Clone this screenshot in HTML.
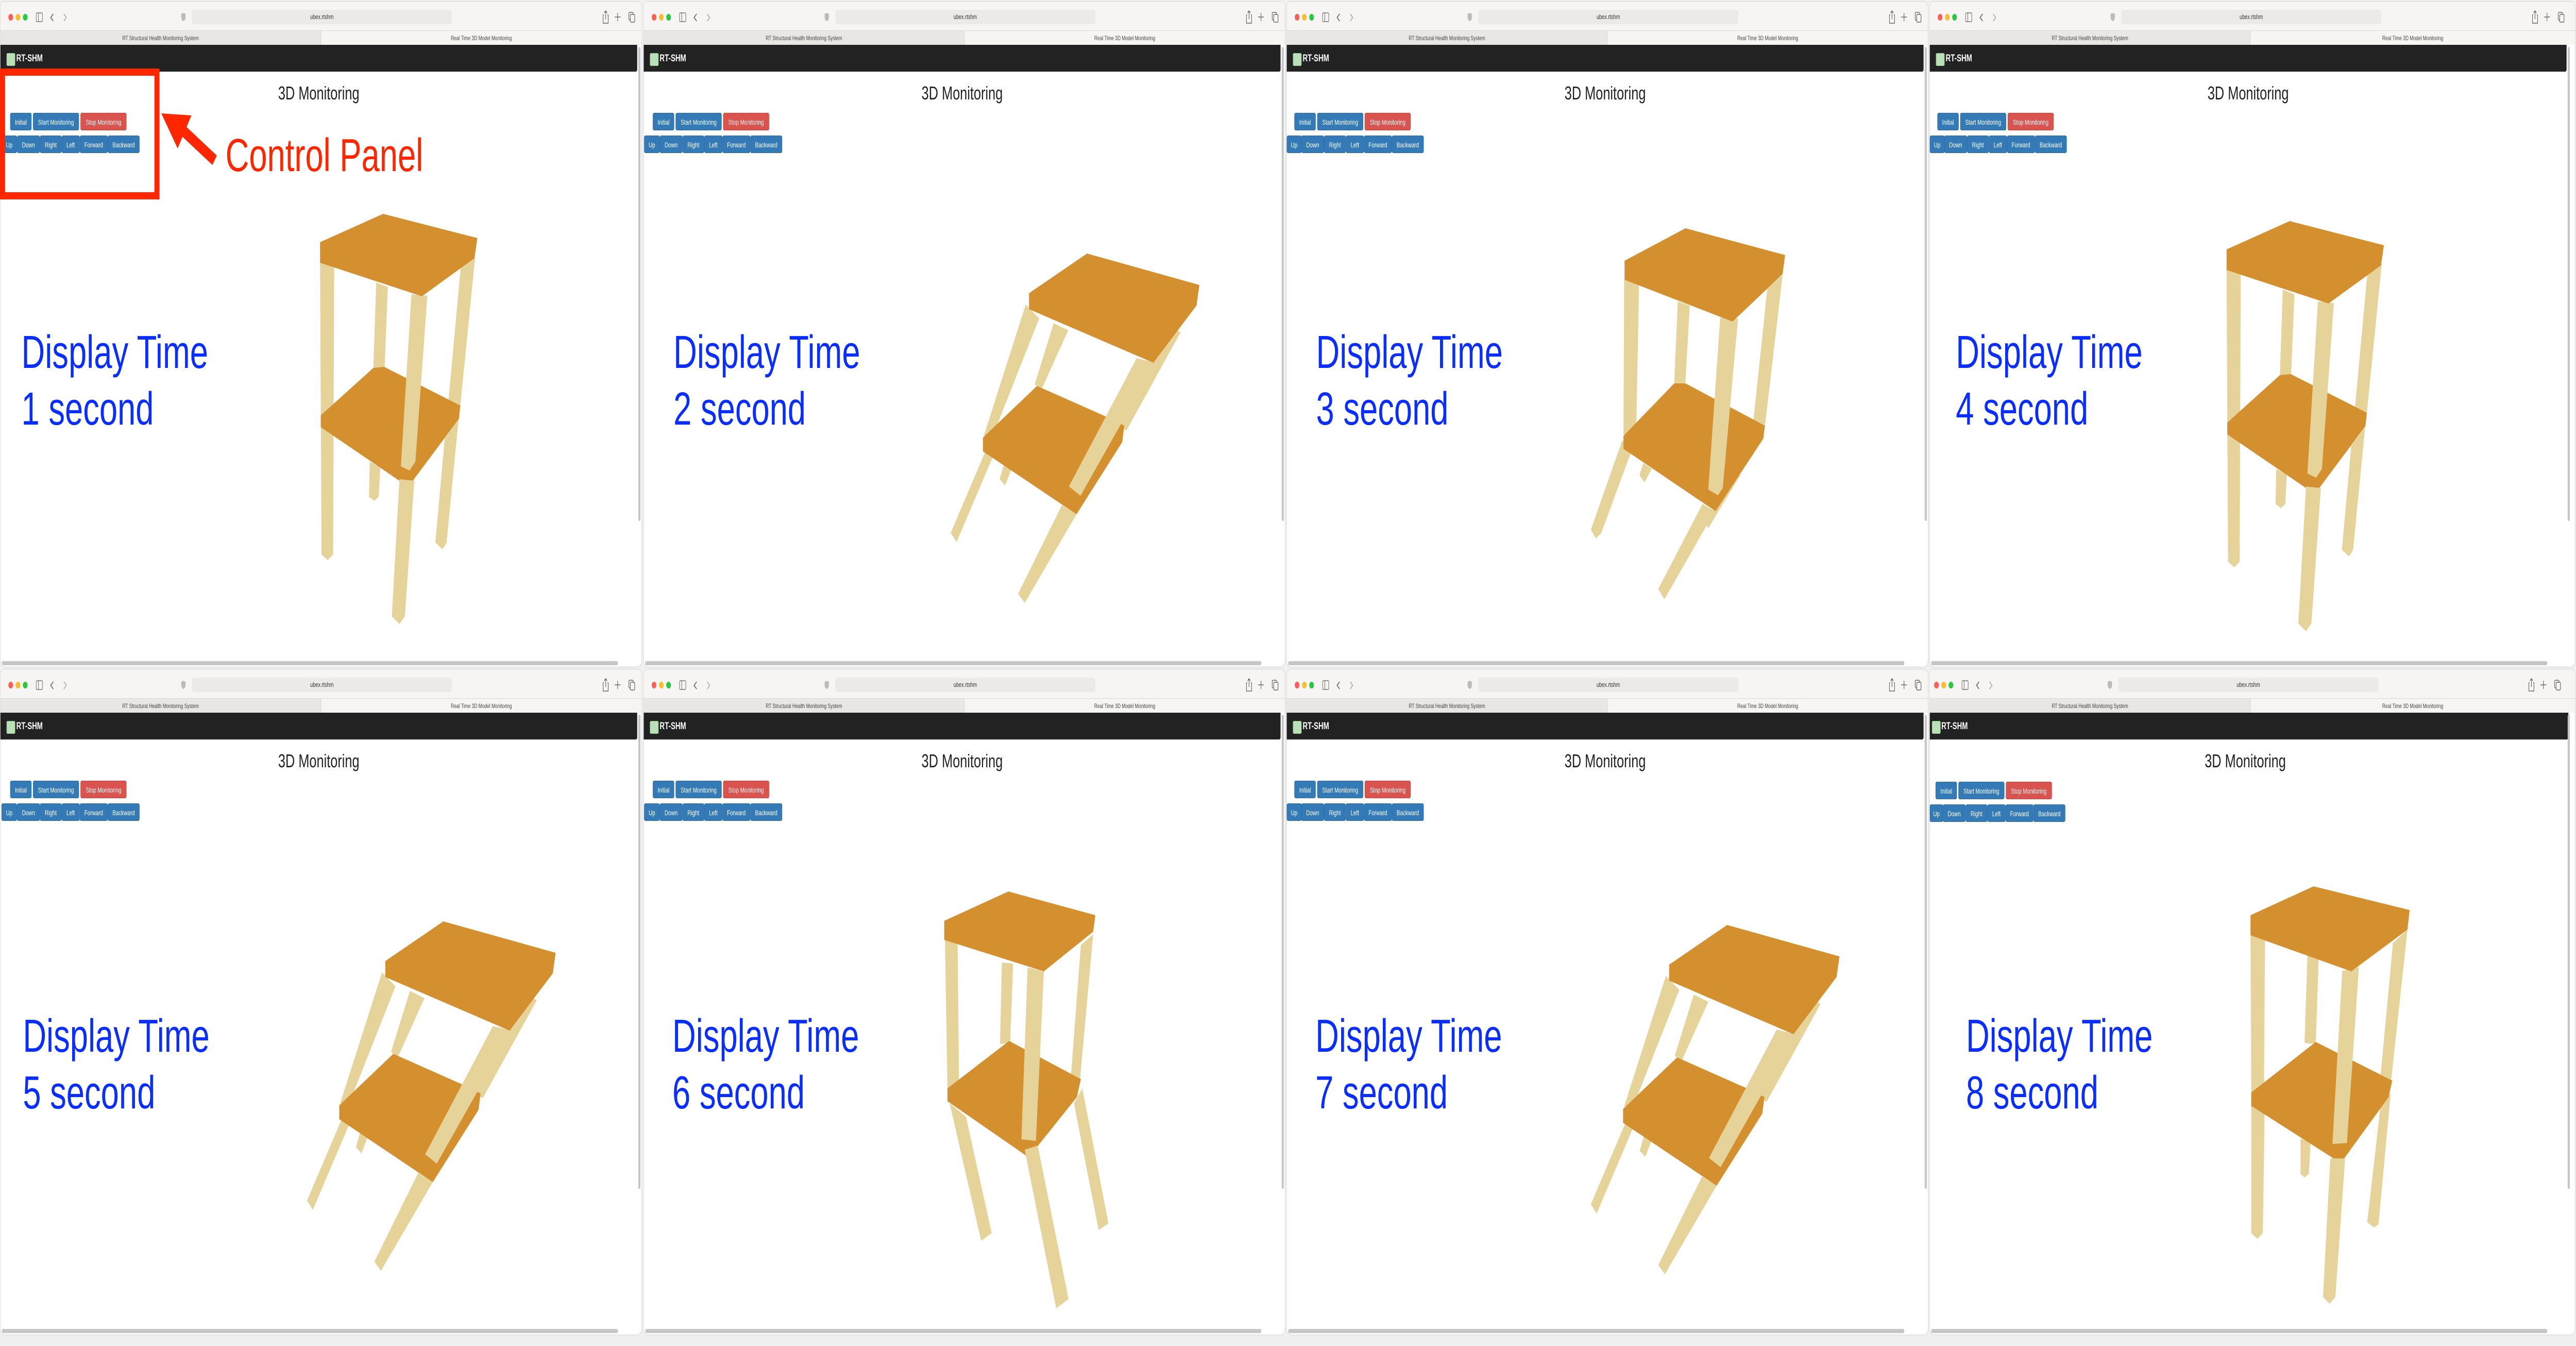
<!DOCTYPE html>
<html><head><meta charset="utf-8"><style>
*{margin:0;padding:0;box-sizing:border-box}
html,body{width:100%;height:100%;overflow:hidden;background:#f0f0f0}
#root{position:relative;width:7107px;height:2612px;background:#f0f0f0;font-family:"Liberation Sans",Arial,sans-serif;overflow:hidden}
.p{position:absolute;width:1771px;height:1293px;background:#fff;border:1px solid #d2d2d2;border-radius:12px;overflow:hidden}
.tb{position:absolute;left:0;top:0;width:100%;height:56px;background:#f6f5f4}
.tl{position:absolute;top:24px;width:13px;height:13px;border-radius:50%}
.addr{position:absolute;left:528px;top:16px;width:718px;height:28px;background:#ebeae9;border-radius:7px;font-size:13px;color:#333;text-align:center;line-height:28px}
.tabs{position:absolute;left:0;top:56px;width:100%;height:28px;background:#f6f5f4;border-top:1px solid #d6d6d6}
.tab1{position:absolute;left:0;top:0;width:885px;height:28px;background:#e8e7e6;border-right:1px solid #d0d0d0;font-size:12px;color:#444;text-align:center;line-height:28px}
.tab2{position:absolute;left:885px;top:0;right:0;height:28px;font-size:12px;color:#444;text-align:center;line-height:28px}
.nav{position:absolute;left:0;top:84px;width:1757px;height:52px;background:#222;border-radius:0 0 4px 0}
.logo{position:absolute;left:17px;top:16px;width:24px;height:25px;background:#b9e0b6;border:1px solid #8fc48a;border-radius:3px}
.brand{position:absolute;left:44px;top:14px;color:#fff;font-size:19px;font-weight:bold;line-height:26px}
.vs{position:absolute;left:1760px;top:88px;width:6px;height:920px;background:#c6c6c6;border-radius:3px}
.hs{position:absolute;left:4px;top:1280px;width:1700px;height:8px;background:#c6c6c6;border-radius:4px}
.ttl{position:absolute;left:0;width:1757px;top:160px;text-align:center;font-size:36px;line-height:36px;color:#222}
.b{position:absolute;height:34px;color:#fff;font-size:14px;line-height:34px;text-align:center;background:#337ab7;border:1px solid #2e6da4;border-radius:4px}
.r{background:#d9534f;border-color:#d43f3a}
.dt{position:absolute;font-size:90px;line-height:110px;color:#0a2eff;white-space:nowrap}
.ico{position:absolute}
</style></head><body>
<svg style="position:fixed;left:0;top:0;width:100vw;height:100vh" viewBox="0 0 7107 2612" preserveAspectRatio="none"><foreignObject x="0" y="0" width="7107" height="2612"><div xmlns="http://www.w3.org/1999/xhtml" id="root">

<div class="p" style="left:0;top:2px">
<div class="tb"><div class="tl" style="left:22px;background:#ff5f57"></div><div class="tl" style="left:42px;background:#febc2e"></div><div class="tl" style="left:62px;background:#28c840"></div>
<svg class="ico" style="left:98px;top:20px" width="100" height="22"><rect x="1" y="2" width="17" height="17" rx="2" fill="none" stroke="#777" stroke-width="1.5"/><line x1="7" y1="2" x2="7" y2="19" stroke="#777" stroke-width="1.5"/><path d="M48 4 L41 11 L48 18" fill="none" stroke="#666" stroke-width="2"/><path d="M77 4 L84 11 L77 18" fill="none" stroke="#aaa" stroke-width="2"/></svg>
<svg class="ico" style="left:498px;top:21px" width="14" height="18"><path d="M7 1 L13 3 L13 9 Q13 15 7 17 Q1 15 1 9 L1 3 Z" fill="#bbb"/></svg>
<div class="addr">ubex.rtshm</div>
<svg class="ico" style="left:1660px;top:16px" width="100" height="28"><path d="M5 10 L3 10 L3 26 L17 26 L17 10 L15 10 M10 2 L10 18 M6 6 L10 2 L14 6" fill="none" stroke="#666" stroke-width="1.6"/><path d="M43 6 L43 22 M35 14 L51 14" stroke="#666" stroke-width="1.6"/><rect x="74" y="5" width="12" height="15" rx="2" fill="none" stroke="#666" stroke-width="1.6"/><rect x="78" y="9" width="12" height="15" rx="2" fill="#f6f5f4" stroke="#666" stroke-width="1.6"/></svg></div>
<div class="tabs"><div class="tab1">RT Structural Health Monitoring System</div><div class="tab2">Real Time 3D Model Monitoring</div></div>
<div class="nav"><div class="logo"></div><div class="brand">RT-SHM</div></div>
<div class="vs"></div><div class="hs"></div>
<div class="ttl">3D Monitoring</div>
<div class="b" style="left:27px;top:216px;width:59px">Initial</div><div class="b" style="left:90px;top:216px;width:127px">Start Monitoring</div><div class="b r" style="left:221px;top:216px;width:127px">Stop Monitoring</div>
<div class="b" style="left:3px;top:260px;width:43px">Up</div><div class="b" style="left:46px;top:260px;width:63px">Down</div><div class="b" style="left:109px;top:260px;width:60px">Right</div><div class="b" style="left:169px;top:260px;width:50px">Left</div><div class="b" style="left:219px;top:260px;width:77px">Forward</div><div class="b" style="left:296px;top:260px;width:88px">Backward</div>
</div>

<div class="p" style="left:1775px;top:2px">
<div class="tb"><div class="tl" style="left:22px;background:#ff5f57"></div><div class="tl" style="left:42px;background:#febc2e"></div><div class="tl" style="left:62px;background:#28c840"></div>
<svg class="ico" style="left:98px;top:20px" width="100" height="22"><rect x="1" y="2" width="17" height="17" rx="2" fill="none" stroke="#777" stroke-width="1.5"/><line x1="7" y1="2" x2="7" y2="19" stroke="#777" stroke-width="1.5"/><path d="M48 4 L41 11 L48 18" fill="none" stroke="#666" stroke-width="2"/><path d="M77 4 L84 11 L77 18" fill="none" stroke="#aaa" stroke-width="2"/></svg>
<svg class="ico" style="left:498px;top:21px" width="14" height="18"><path d="M7 1 L13 3 L13 9 Q13 15 7 17 Q1 15 1 9 L1 3 Z" fill="#bbb"/></svg>
<div class="addr">ubex.rtshm</div>
<svg class="ico" style="left:1660px;top:16px" width="100" height="28"><path d="M5 10 L3 10 L3 26 L17 26 L17 10 L15 10 M10 2 L10 18 M6 6 L10 2 L14 6" fill="none" stroke="#666" stroke-width="1.6"/><path d="M43 6 L43 22 M35 14 L51 14" stroke="#666" stroke-width="1.6"/><rect x="74" y="5" width="12" height="15" rx="2" fill="none" stroke="#666" stroke-width="1.6"/><rect x="78" y="9" width="12" height="15" rx="2" fill="#f6f5f4" stroke="#666" stroke-width="1.6"/></svg></div>
<div class="tabs"><div class="tab1">RT Structural Health Monitoring System</div><div class="tab2">Real Time 3D Model Monitoring</div></div>
<div class="nav"><div class="logo"></div><div class="brand">RT-SHM</div></div>
<div class="vs"></div><div class="hs"></div>
<div class="ttl">3D Monitoring</div>
<div class="b" style="left:25px;top:216px;width:59px">Initial</div><div class="b" style="left:88px;top:216px;width:127px">Start Monitoring</div><div class="b r" style="left:219px;top:216px;width:127px">Stop Monitoring</div>
<div class="b" style="left:1px;top:260px;width:43px">Up</div><div class="b" style="left:44px;top:260px;width:63px">Down</div><div class="b" style="left:107px;top:260px;width:60px">Right</div><div class="b" style="left:167px;top:260px;width:50px">Left</div><div class="b" style="left:217px;top:260px;width:77px">Forward</div><div class="b" style="left:294px;top:260px;width:88px">Backward</div>
</div>

<div class="p" style="left:3549px;top:2px">
<div class="tb"><div class="tl" style="left:22px;background:#ff5f57"></div><div class="tl" style="left:42px;background:#febc2e"></div><div class="tl" style="left:62px;background:#28c840"></div>
<svg class="ico" style="left:98px;top:20px" width="100" height="22"><rect x="1" y="2" width="17" height="17" rx="2" fill="none" stroke="#777" stroke-width="1.5"/><line x1="7" y1="2" x2="7" y2="19" stroke="#777" stroke-width="1.5"/><path d="M48 4 L41 11 L48 18" fill="none" stroke="#666" stroke-width="2"/><path d="M77 4 L84 11 L77 18" fill="none" stroke="#aaa" stroke-width="2"/></svg>
<svg class="ico" style="left:498px;top:21px" width="14" height="18"><path d="M7 1 L13 3 L13 9 Q13 15 7 17 Q1 15 1 9 L1 3 Z" fill="#bbb"/></svg>
<div class="addr">ubex.rtshm</div>
<svg class="ico" style="left:1660px;top:16px" width="100" height="28"><path d="M5 10 L3 10 L3 26 L17 26 L17 10 L15 10 M10 2 L10 18 M6 6 L10 2 L14 6" fill="none" stroke="#666" stroke-width="1.6"/><path d="M43 6 L43 22 M35 14 L51 14" stroke="#666" stroke-width="1.6"/><rect x="74" y="5" width="12" height="15" rx="2" fill="none" stroke="#666" stroke-width="1.6"/><rect x="78" y="9" width="12" height="15" rx="2" fill="#f6f5f4" stroke="#666" stroke-width="1.6"/></svg></div>
<div class="tabs"><div class="tab1">RT Structural Health Monitoring System</div><div class="tab2">Real Time 3D Model Monitoring</div></div>
<div class="nav"><div class="logo"></div><div class="brand">RT-SHM</div></div>
<div class="vs"></div><div class="hs"></div>
<div class="ttl">3D Monitoring</div>
<div class="b" style="left:21px;top:216px;width:59px">Initial</div><div class="b" style="left:84px;top:216px;width:127px">Start Monitoring</div><div class="b r" style="left:215px;top:216px;width:127px">Stop Monitoring</div>
<div class="b" style="left:0px;top:260px;width:41px">Up</div><div class="b" style="left:40px;top:260px;width:63px">Down</div><div class="b" style="left:103px;top:260px;width:60px">Right</div><div class="b" style="left:163px;top:260px;width:50px">Left</div><div class="b" style="left:213px;top:260px;width:77px">Forward</div><div class="b" style="left:290px;top:260px;width:88px">Backward</div>
</div>

<div class="p" style="left:5323px;top:2px;width:1782px">
<div class="tb"><div class="tl" style="left:22px;background:#ff5f57"></div><div class="tl" style="left:42px;background:#febc2e"></div><div class="tl" style="left:62px;background:#28c840"></div>
<svg class="ico" style="left:98px;top:20px" width="100" height="22"><rect x="1" y="2" width="17" height="17" rx="2" fill="none" stroke="#777" stroke-width="1.5"/><line x1="7" y1="2" x2="7" y2="19" stroke="#777" stroke-width="1.5"/><path d="M48 4 L41 11 L48 18" fill="none" stroke="#666" stroke-width="2"/><path d="M77 4 L84 11 L77 18" fill="none" stroke="#aaa" stroke-width="2"/></svg>
<svg class="ico" style="left:498px;top:21px" width="14" height="18"><path d="M7 1 L13 3 L13 9 Q13 15 7 17 Q1 15 1 9 L1 3 Z" fill="#bbb"/></svg>
<div class="addr">ubex.rtshm</div>
<svg class="ico" style="left:1660px;top:16px" width="100" height="28"><path d="M5 10 L3 10 L3 26 L17 26 L17 10 L15 10 M10 2 L10 18 M6 6 L10 2 L14 6" fill="none" stroke="#666" stroke-width="1.6"/><path d="M43 6 L43 22 M35 14 L51 14" stroke="#666" stroke-width="1.6"/><rect x="74" y="5" width="12" height="15" rx="2" fill="none" stroke="#666" stroke-width="1.6"/><rect x="78" y="9" width="12" height="15" rx="2" fill="#f6f5f4" stroke="#666" stroke-width="1.6"/></svg></div>
<div class="tabs"><div class="tab1">RT Structural Health Monitoring System</div><div class="tab2">Real Time 3D Model Monitoring</div></div>
<div class="nav"><div class="logo"></div><div class="brand">RT-SHM</div></div>
<div class="vs"></div><div class="hs"></div>
<div class="ttl">3D Monitoring</div>
<div class="b" style="left:21px;top:216px;width:59px">Initial</div><div class="b" style="left:84px;top:216px;width:127px">Start Monitoring</div><div class="b r" style="left:215px;top:216px;width:127px">Stop Monitoring</div>
<div class="b" style="left:0px;top:260px;width:41px">Up</div><div class="b" style="left:40px;top:260px;width:63px">Down</div><div class="b" style="left:103px;top:260px;width:60px">Right</div><div class="b" style="left:163px;top:260px;width:50px">Left</div><div class="b" style="left:213px;top:260px;width:77px">Forward</div><div class="b" style="left:290px;top:260px;width:88px">Backward</div>
</div>

<div class="p" style="left:0;top:1298px">
<div class="tb"><div class="tl" style="left:22px;background:#ff5f57"></div><div class="tl" style="left:42px;background:#febc2e"></div><div class="tl" style="left:62px;background:#28c840"></div>
<svg class="ico" style="left:98px;top:20px" width="100" height="22"><rect x="1" y="2" width="17" height="17" rx="2" fill="none" stroke="#777" stroke-width="1.5"/><line x1="7" y1="2" x2="7" y2="19" stroke="#777" stroke-width="1.5"/><path d="M48 4 L41 11 L48 18" fill="none" stroke="#666" stroke-width="2"/><path d="M77 4 L84 11 L77 18" fill="none" stroke="#aaa" stroke-width="2"/></svg>
<svg class="ico" style="left:498px;top:21px" width="14" height="18"><path d="M7 1 L13 3 L13 9 Q13 15 7 17 Q1 15 1 9 L1 3 Z" fill="#bbb"/></svg>
<div class="addr">ubex.rtshm</div>
<svg class="ico" style="left:1660px;top:16px" width="100" height="28"><path d="M5 10 L3 10 L3 26 L17 26 L17 10 L15 10 M10 2 L10 18 M6 6 L10 2 L14 6" fill="none" stroke="#666" stroke-width="1.6"/><path d="M43 6 L43 22 M35 14 L51 14" stroke="#666" stroke-width="1.6"/><rect x="74" y="5" width="12" height="15" rx="2" fill="none" stroke="#666" stroke-width="1.6"/><rect x="78" y="9" width="12" height="15" rx="2" fill="#f6f5f4" stroke="#666" stroke-width="1.6"/></svg></div>
<div class="tabs"><div class="tab1">RT Structural Health Monitoring System</div><div class="tab2">Real Time 3D Model Monitoring</div></div>
<div class="nav"><div class="logo"></div><div class="brand">RT-SHM</div></div>
<div class="vs"></div><div class="hs"></div>
<div class="ttl">3D Monitoring</div>
<div class="b" style="left:27px;top:216px;width:59px">Initial</div><div class="b" style="left:90px;top:216px;width:127px">Start Monitoring</div><div class="b r" style="left:221px;top:216px;width:127px">Stop Monitoring</div>
<div class="b" style="left:3px;top:260px;width:43px">Up</div><div class="b" style="left:46px;top:260px;width:63px">Down</div><div class="b" style="left:109px;top:260px;width:60px">Right</div><div class="b" style="left:169px;top:260px;width:50px">Left</div><div class="b" style="left:219px;top:260px;width:77px">Forward</div><div class="b" style="left:296px;top:260px;width:88px">Backward</div>
</div>

<div class="p" style="left:1775px;top:1298px">
<div class="tb"><div class="tl" style="left:22px;background:#ff5f57"></div><div class="tl" style="left:42px;background:#febc2e"></div><div class="tl" style="left:62px;background:#28c840"></div>
<svg class="ico" style="left:98px;top:20px" width="100" height="22"><rect x="1" y="2" width="17" height="17" rx="2" fill="none" stroke="#777" stroke-width="1.5"/><line x1="7" y1="2" x2="7" y2="19" stroke="#777" stroke-width="1.5"/><path d="M48 4 L41 11 L48 18" fill="none" stroke="#666" stroke-width="2"/><path d="M77 4 L84 11 L77 18" fill="none" stroke="#aaa" stroke-width="2"/></svg>
<svg class="ico" style="left:498px;top:21px" width="14" height="18"><path d="M7 1 L13 3 L13 9 Q13 15 7 17 Q1 15 1 9 L1 3 Z" fill="#bbb"/></svg>
<div class="addr">ubex.rtshm</div>
<svg class="ico" style="left:1660px;top:16px" width="100" height="28"><path d="M5 10 L3 10 L3 26 L17 26 L17 10 L15 10 M10 2 L10 18 M6 6 L10 2 L14 6" fill="none" stroke="#666" stroke-width="1.6"/><path d="M43 6 L43 22 M35 14 L51 14" stroke="#666" stroke-width="1.6"/><rect x="74" y="5" width="12" height="15" rx="2" fill="none" stroke="#666" stroke-width="1.6"/><rect x="78" y="9" width="12" height="15" rx="2" fill="#f6f5f4" stroke="#666" stroke-width="1.6"/></svg></div>
<div class="tabs"><div class="tab1">RT Structural Health Monitoring System</div><div class="tab2">Real Time 3D Model Monitoring</div></div>
<div class="nav"><div class="logo"></div><div class="brand">RT-SHM</div></div>
<div class="vs"></div><div class="hs"></div>
<div class="ttl">3D Monitoring</div>
<div class="b" style="left:25px;top:216px;width:59px">Initial</div><div class="b" style="left:88px;top:216px;width:127px">Start Monitoring</div><div class="b r" style="left:219px;top:216px;width:127px">Stop Monitoring</div>
<div class="b" style="left:1px;top:260px;width:43px">Up</div><div class="b" style="left:44px;top:260px;width:63px">Down</div><div class="b" style="left:107px;top:260px;width:60px">Right</div><div class="b" style="left:167px;top:260px;width:50px">Left</div><div class="b" style="left:217px;top:260px;width:77px">Forward</div><div class="b" style="left:294px;top:260px;width:88px">Backward</div>
</div>

<div class="p" style="left:3549px;top:1298px">
<div class="tb"><div class="tl" style="left:22px;background:#ff5f57"></div><div class="tl" style="left:42px;background:#febc2e"></div><div class="tl" style="left:62px;background:#28c840"></div>
<svg class="ico" style="left:98px;top:20px" width="100" height="22"><rect x="1" y="2" width="17" height="17" rx="2" fill="none" stroke="#777" stroke-width="1.5"/><line x1="7" y1="2" x2="7" y2="19" stroke="#777" stroke-width="1.5"/><path d="M48 4 L41 11 L48 18" fill="none" stroke="#666" stroke-width="2"/><path d="M77 4 L84 11 L77 18" fill="none" stroke="#aaa" stroke-width="2"/></svg>
<svg class="ico" style="left:498px;top:21px" width="14" height="18"><path d="M7 1 L13 3 L13 9 Q13 15 7 17 Q1 15 1 9 L1 3 Z" fill="#bbb"/></svg>
<div class="addr">ubex.rtshm</div>
<svg class="ico" style="left:1660px;top:16px" width="100" height="28"><path d="M5 10 L3 10 L3 26 L17 26 L17 10 L15 10 M10 2 L10 18 M6 6 L10 2 L14 6" fill="none" stroke="#666" stroke-width="1.6"/><path d="M43 6 L43 22 M35 14 L51 14" stroke="#666" stroke-width="1.6"/><rect x="74" y="5" width="12" height="15" rx="2" fill="none" stroke="#666" stroke-width="1.6"/><rect x="78" y="9" width="12" height="15" rx="2" fill="#f6f5f4" stroke="#666" stroke-width="1.6"/></svg></div>
<div class="tabs"><div class="tab1">RT Structural Health Monitoring System</div><div class="tab2">Real Time 3D Model Monitoring</div></div>
<div class="nav"><div class="logo"></div><div class="brand">RT-SHM</div></div>
<div class="vs"></div><div class="hs"></div>
<div class="ttl">3D Monitoring</div>
<div class="b" style="left:21px;top:216px;width:59px">Initial</div><div class="b" style="left:84px;top:216px;width:127px">Start Monitoring</div><div class="b r" style="left:215px;top:216px;width:127px">Stop Monitoring</div>
<div class="b" style="left:0px;top:260px;width:41px">Up</div><div class="b" style="left:40px;top:260px;width:63px">Down</div><div class="b" style="left:103px;top:260px;width:60px">Right</div><div class="b" style="left:163px;top:260px;width:50px">Left</div><div class="b" style="left:213px;top:260px;width:77px">Forward</div><div class="b" style="left:290px;top:260px;width:88px">Backward</div>
</div>

<div class="p" style="left:5323px;top:1298px;width:1782px">
<div class="tb"><div class="tl" style="left:12px;background:#ff5f57"></div><div class="tl" style="left:32px;background:#febc2e"></div><div class="tl" style="left:52px;background:#28c840"></div>
<svg class="ico" style="left:88px;top:20px" width="100" height="22"><rect x="1" y="2" width="17" height="17" rx="2" fill="none" stroke="#777" stroke-width="1.5"/><line x1="7" y1="2" x2="7" y2="19" stroke="#777" stroke-width="1.5"/><path d="M48 4 L41 11 L48 18" fill="none" stroke="#666" stroke-width="2"/><path d="M77 4 L84 11 L77 18" fill="none" stroke="#aaa" stroke-width="2"/></svg>
<svg class="ico" style="left:490px;top:21px" width="14" height="18"><path d="M7 1 L13 3 L13 9 Q13 15 7 17 Q1 15 1 9 L1 3 Z" fill="#bbb"/></svg>
<div class="addr" style="left:520px">ubex.rtshm</div>
<svg class="ico" style="left:1650px;top:16px" width="100" height="28"><path d="M5 10 L3 10 L3 26 L17 26 L17 10 L15 10 M10 2 L10 18 M6 6 L10 2 L14 6" fill="none" stroke="#666" stroke-width="1.6"/><path d="M43 6 L43 22 M35 14 L51 14" stroke="#666" stroke-width="1.6"/><rect x="74" y="5" width="12" height="15" rx="2" fill="none" stroke="#666" stroke-width="1.6"/><rect x="78" y="9" width="12" height="15" rx="2" fill="#f6f5f4" stroke="#666" stroke-width="1.6"/></svg></div>
<div class="tabs"><div class="tab1">RT Structural Health Monitoring System</div><div class="tab2">Real Time 3D Model Monitoring</div></div>
<div class="nav" style="width:1762px"><div class="logo" style="left:6px"></div><div class="brand" style="left:32px">RT-SHM</div></div>
<div class="vs"></div><div class="hs"></div>
<div class="ttl" style="left:-8px">3D Monitoring</div>
<div class="b" style="left:16px;top:218px;width:59px">Initial</div><div class="b" style="left:79px;top:218px;width:127px">Start Monitoring</div><div class="b r" style="left:210px;top:218px;width:127px">Stop Monitoring</div>
<div class="b" style="left:0px;top:262px;width:37px">Up</div><div class="b" style="left:36px;top:262px;width:63px">Down</div><div class="b" style="left:99px;top:262px;width:60px">Right</div><div class="b" style="left:159px;top:262px;width:50px">Left</div><div class="b" style="left:209px;top:262px;width:77px">Forward</div><div class="b" style="left:286px;top:262px;width:88px">Backward</div>
</div>

<div class="dt" style="left:59px;top:629px">Display Time<br/>1 second</div>
<div class="dt" style="left:1858px;top:629px">Display Time<br/>2 second</div>
<div class="dt" style="left:3631px;top:629px">Display Time<br/>3 second</div>
<div class="dt" style="left:5396px;top:629px">Display Time<br/>4 second</div>
<div class="dt" style="left:63px;top:1956px">Display Time<br/>5 second</div>
<div class="dt" style="left:1855px;top:1956px">Display Time<br/>6 second</div>
<div class="dt" style="left:3629px;top:1956px">Display Time<br/>7 second</div>
<div class="dt" style="left:5424px;top:1956px">Display Time<br/>8 second</div>

<div style="position:absolute;left:0;top:133px;width:440px;height:254px;border:14px solid #ff2600"></div>
<svg style="position:absolute;left:0;top:0" width="700" height="400"><polygon points="445,220 528,224 490,288" fill="#ff2600"/><line x1="500" y1="250" x2="592" y2="311" stroke="#ff2600" stroke-width="22"/></svg>
<div style="position:absolute;left:622px;top:252px;font-size:90px;line-height:100px;color:#ff2600">Control Panel</div>

<svg style="position:absolute;left:0;top:0" width="7107" height="2612" viewBox="0 0 7107 2612">
<defs>
<g id="up">
<g fill="#e6d399">
<polygon points="1038,548 1070,557 1061,714 1047,720 1030,714"/>
<polygon points="1020,896 1049,907 1045,964 1033,972 1018,964"/>
<polygon points="883,510 922,517 919,1076 904,1087 887,1076"/>
<polygon points="1271,520 1311,498 1270,787 1259,794 1236,787"/>
<polygon points="1227,851 1265,815 1232,1053 1221,1066 1201,1053"/>
</g>
<polygon fill="#d4902e" points="885,806 1030,714 1060,712 1270,787 1266,813 1127,944 1102,933 885,829"/>
<g fill="#e6d399">
<polygon points="1135,571 1179,574 1146,896 1130,913 1106,905"/>
<polygon points="1102,930 1143,933 1117,1196 1102,1211 1081,1196"/>
</g>
<polygon fill="#d4902e" points="883,470 1057,415 1317,462 1309,501 1164,575 883,510"/>
</g>
<g id="tilt">
<g fill="#e6d399">
<polygon points="993,903 1016,908 997,942 982,930"/>
<polygon points="1131,627 1171,641 1096,758 1079,745"/>
<polygon points="1458,636 1481,645 1332,835 1309,826"/>
<polygon points="1054,591 1091,618 959,853 939,844"/>
<polygon points="951,862 964,885 863,1052 847,1034"/>
</g>
<polygon fill="#d4902e" points="936,849 1085,749 1274,808 1326,826 1320,858 1194,998 936,876"/>
<g fill="#e6d399">
<polygon points="1360,695 1412,704 1205,962 1173,944"/>
<polygon points="1154,980 1194,998 1051,1170 1033,1152"/>
</g>
<polygon fill="#d4902e" points="1063,569 1223,492 1533,553 1525,593 1406,704 1063,600"/>
</g>
<g id="c3">
<g fill="#e6d399">
<polygon points="4534,899 4557,910 4537,936 4523,922"/>
<polygon points="4629,585 4662,593 4650,742 4638,750 4619,744"/>
<polygon points="4481,543 4522,553 4514,840 4499,850 4479,843"/>
<polygon points="4476,854 4499,879 4418,1034 4403,1045 4389,1028"/>
<polygon points="4876,560 4918,534 4869,829 4858,833 4836,826"/>
<polygon points="4782,933 4804,919 4713,1025 4704,1014"/>
</g>
<polygon fill="#d4902e" points="4479,846 4619,744 4650,744 4869,826 4865,851 4733,992 4479,871"/>
<g fill="#e6d399">
<polygon points="4746,616 4795,618 4753,947 4740,961 4713,950"/>
<polygon points="4697,978 4731,992 4592,1163 4575,1143"/>
</g>
<polygon fill="#d4902e" points="4482,506 4650,443 4925,495 4918,532 4780,624 4482,543"/>
</g>
<g id="tall">
<g fill="#e6d399">
<polygon points="988,572 1019,574 1011,728 983,730"/>
<polygon points="831,528 866,536 870,811 838,818"/>
<polygon points="844,845 889,871 960,1097 931,1112"/>
<polygon points="1206,538 1240,517 1203,803 1178,798"/>
<polygon points="1187,845 1210,816 1282,1078 1255,1091"/>
</g>
<polygon fill="#d4902e" points="838,816 1008,724 1206,798 1195,833 1062,950 838,841"/>
<g fill="#e6d399">
<polygon points="1059,581 1104,589 1082,918 1042,915"/>
<polygon points="1051,935 1087,927 1172,1225 1138,1243"/>
</g>
<polygon fill="#d4902e" points="829,491 1006,434 1246,480 1240,512 1104,589 829,528"/>
</g>
<g id="c8">
<g fill="#e6d399">
<polygon points="1040,559 1071,564 1063,730 1032,728"/>
<polygon points="1021,914 1049,918 1044,982 1032,989 1021,982"/>
<polygon points="883,519 923,529 920,824 885,830"/>
<polygon points="885,850 922,858 917,1097 902,1108 885,1097"/>
<polygon points="1276,534 1316,508 1270,807 1241,798"/>
<polygon points="1241,854 1270,824 1236,1080 1224,1086 1205,1076"/>
</g>
<polygon fill="#d4902e" points="885,824 1063,726 1274,801 1264,833 1132,961 885,850"/>
<g fill="#e6d399">
<polygon points="1136,588 1182,581 1149,922 1109,924"/>
<polygon points="1103,952 1144,952 1117,1221 1101,1234 1083,1221"/>
</g>
<polygon fill="#d4902e" points="883,480 1057,424 1322,470 1316,508 1161,589 883,519"/>
</g>
</defs>
<use href="#up"/>
<use href="#tilt" transform="translate(1776,0)"/>
<use href="#c3"/>
<use href="#up" transform="translate(5260,14)"/>
<use href="#tilt" transform="translate(0,1296)"/>
<use href="#tall" transform="translate(1776,1296)"/>
<use href="#tilt" transform="translate(3542,1303)"/>
<use href="#c8" transform="translate(5326,1296)"/>
</svg>
</div></foreignObject></svg>
</body></html>
